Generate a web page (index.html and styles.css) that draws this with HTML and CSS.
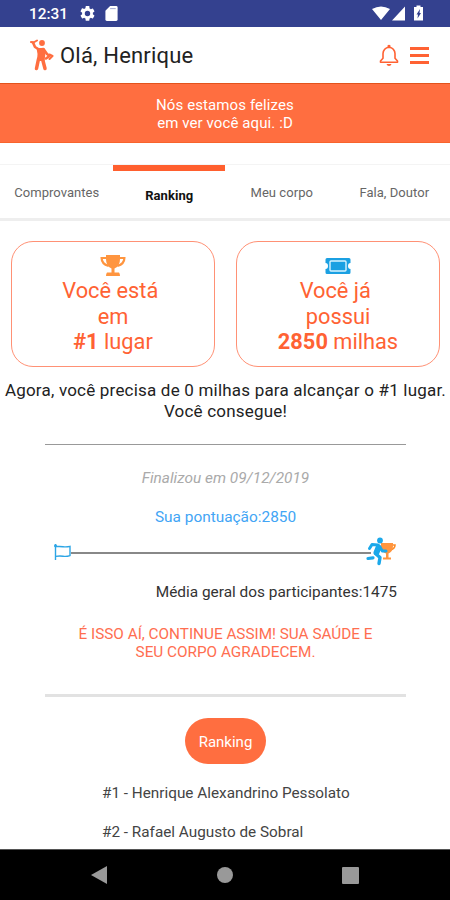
FILE: index.html
```html
<!DOCTYPE html>
<html lang="pt-BR">
<head>
    <meta charset="UTF-8">
    <title>Ranking</title>
    <link rel="stylesheet" href="styles.css">
</head>
<body>
    <div class="status-bar">
        <span class="clock">12:31</span>
        <svg class="gear" width="15" height="15" viewBox="2 2 20 20"><path fill="#fff" d="M19.14 12.94c.04-.3.06-.61.06-.94s-.02-.64-.07-.94l2.03-1.58a.5.5 0 0 0 .12-.61l-1.92-3.32a.49.49 0 0 0-.59-.22l-2.39.96a7 7 0 0 0-1.62-.94l-.36-2.54A.48.48 0 0 0 13.92 2h-3.84a.48.48 0 0 0-.47.41l-.36 2.54c-.59.24-1.13.57-1.62.94l-2.39-.96a.48.48 0 0 0-.59.22L2.74 8.87a.48.48 0 0 0 .12.61l2.03 1.58c-.05.3-.09.63-.09.94s.02.64.07.94l-2.03 1.58a.5.5 0 0 0-.12.61l1.92 3.32c.12.22.37.29.59.22l2.39-.96c.5.38 1.03.7 1.62.94l.36 2.54c.05.24.24.41.48.41h3.84c.24 0 .44-.17.47-.41l.36-2.54a7 7 0 0 0 1.62-.94l2.39.96c.22.08.47 0 .59-.22l1.92-3.32a.48.48 0 0 0-.12-.61zM12 15.6a3.6 3.6 0 1 1 0-7.2 3.6 3.6 0 0 1 0 7.2z"/></svg>
        <svg class="sd" width="13" height="15" viewBox="0 0 13 16"><path fill="#fff" d="M5 0h6.500q1.500 0 1.500 1.500v13q0 1.500-1.500 1.500h-10q-1.500 0-1.500-1.500V5z"/><path stroke="#9aa2cf" d="M5 2.800h6"/></svg>
        <svg class="signals" width="54" height="17" viewBox="0 0 54 17">
            <path fill="#fff" d="M0 4Q9-1 18 4L9 15zM20 15.500 33 1.500v14zM42 2h2.500V.5h4V2H51v13.500h-9z"/>
            <path fill="#34418f" d="M48 4 44.500 9.500h1.500l-.5 4 3.500-5.500h-1.500z"/>
        </svg>
    </div>

    <div class="header">
        <svg class="logo" width="24" height="32" viewBox="0 0 24 32">
            <g fill="none" stroke="#ff6e40" stroke-linejoin="round" stroke-linecap="round">
                <path stroke-width="2.600" d="M3 3.500 5 8l4 2.500 4.500-.5 3.500 5 2.500 2-3.500 2.500"/>
                <path stroke-width="2" d="M1 3 3.500 3.500 7 1.500M19.500 15.500l3 1.500-3 3"/>
                <path stroke-width="3.500" d="M8.500 20 6.500 29.500M12.500 20l2.500 9.500"/>
            </g>
            <path fill="#ff6e40" d="M6.500 9 14.500 9.500 15.500 14 14.500 22H7l.5-7z"/>
            <circle fill="#ff6e40" cx="12" cy="4" r="2.900"/>
        </svg>
        <h1>Olá, Henrique</h1>
        <svg class="bell" width="20" height="23" viewBox="0 0 20 23"><path fill="none" stroke="#ff6233" stroke-width="1.600" stroke-linejoin="round" d="M1.500 18.200v-1.200l2.500-2.800V9.500Q4.400 4 10 3.200 15.600 4 16 9.500v4.700l2.500 2.800v1.200z"/><path fill="#ff6233" d="M8.500 3V1.500q1.500-1.500 3 0V3zM7.500 20h5q-.5 2-2.500 2T7.500 20z"/></svg>
        <div class="menu"><i></i><i></i><i></i></div>
    </div>

    <div class="banner">Nós estamos felizes<br>em ver você aqui. :D</div>

    <div class="tabs">
        <div class="tab">Comprovantes</div>
        <div class="tab active">Ranking</div>
        <div class="tab">Meu corpo</div>
        <div class="tab">Fala, Doutor</div>
    </div>

    <div class="cards">
        <div class="card">
            <svg width="26" height="24" viewBox="0 0 26 24">
                <path fill="none" stroke="#ff953f" stroke-width="2.200" d="M7 4H1.600q0 6 7 8M19 4h5.400q0 6-7 8"/>
                <path fill="#ff953f" d="M6 1h14v4q0 7.500-5.500 9.500v4H19q1 1 1 3.500H6q0-2.500 1-3.500h4.500v-4Q6 12.500 6 5z"/>
            </svg>
            <p>Você está&nbsp;<br>em<br><b>#1</b> lugar</p>
        </div>
        <div class="card">
            <svg width="26" height="24" viewBox="0 0 26 24">
                <path fill="#1ba0e2" d="M2 4h22q1.500 0 1.500 1.500V9q-2.500 0-2.500 3t2.500 3v3.500Q25.500 20 24 20H2Q.5 20 .5 18.500V15Q3 15 3 12T.5 9V5.500Q.5 4 2 4z"/>
                <rect x="5" y="7" width="16" height="10" rx="1" fill="none" stroke="#d9f3ff" stroke-width="1.400"/>
            </svg>
            <p>Você já&nbsp;<br>possui<br><b>2850</b> milhas</p>
        </div>
    </div>

    <p class="goal">Agora, você precisa de 0 milhas para alcançar o #1 lugar.<br>Você consegue!</p>

    <div class="result">
        <p class="ended">Finalizou em 09/12/2019</p>
        <p class="score">Sua pontuação:2850</p>
        <div class="track">
            <svg width="17" height="17" viewBox="0 0 17 17"><path fill="none" stroke="#2ca5e5" stroke-width="1.400" d="M1.500 0v16M1.500 2.200q4 0 7.500.5t7-.3v9.200q-3.500 1.200-7 .6t-7.500.2"/><circle cx="1.500" cy="1.800" r="1.500" fill="#2ca5e5"/></svg>
            <div class="line"></div>
            <svg width="31" height="30" viewBox="0 0 31 30">
                <path fill="none" stroke="#ff8b24" stroke-width="1.600" d="M27 8h3q0 4-5 5"/>
                <path fill="#ff953f" d="M16 6h12v3q0 5.500-4.500 7.500v4H26v2h-8v-2h3v-4Q16 15 16 10z"/>
                <g fill="none" stroke="#1ba8ea" stroke-linecap="round" stroke-linejoin="round">
                    <path stroke-width="3" d="M4.500 11.500 7 7.500 13 8l4.500 6h3.500"/>
                    <path stroke-width="6" d="M13.500 10.500 11.500 15.500"/>
                    <path stroke-width="3.400" d="M11 17 15 20.500l-1 6"/>
                    <path stroke-width="3.200" d="M8 20.800 3 21.500"/>
                </g>
                <circle cx="15" cy="3.500" r="2.900" fill="#1ba8ea"/>
            </svg>
        </div>
        <p class="average">Média geral dos participantes:1475</p>
        <p class="cheer">É ISSO AÍ, CONTINUE ASSIM! SUA SAÚDE E<br>SEU CORPO AGRADECEM.</p>
    </div>

    <div class="ranking">
        <div class="ranking-button">Ranking</div>
        <p class="place">#1 - Henrique Alexandrino Pessolato</p>
        <p class="place">#2 - Rafael Augusto de Sobral</p>
    </div>

    <div class="nav-bar">
        <svg width="16" height="18" viewBox="0 0 16 18"><path fill="#999" d="M0 9 16 0v18z"/></svg>
        <div class="home"></div>
        <div class="recent"></div>
    </div>
</body>
</html>
```

FILE: styles.css
```css
* {
    box-sizing: border-box;
}
body {
    margin: 0;
    height: 900px;
    display: flex;
    flex-direction: column;
    overflow: hidden;
    font-family: Roboto, sans-serif;
    font-size: 15.400px;
    color: #333;
    background-color: #fff;
}
p, h1 {
    margin: 0;
    font-weight: normal;
    white-space: nowrap;
}
svg {
    display: block;
    flex: none;
}
.status-bar {
    height: 27px;
    flex: none;
    display: flex;
    align-items: center;
    padding: 0 28px 0 29px;
    background-color: #34418f;
    color: #fff;
}
.clock {
    width: 51px;
    font-size: 15.400px;
    font-weight: 500;
}
.sd {
    margin-left: 10px;
}
.signals {
    margin-left: auto;
    margin-right: -4px;
}
.header {
    height: 56px;
    flex: none;
    display: flex;
    align-items: center;
    padding: 0 21px 0 30px;
}
h1 {
    margin: 2px 0 0 6px;
    font-size: 22px;
    line-height: 26px;
    letter-spacing: 0.2px;
    color: #222;
}
.bell {
    margin-left: auto;
}
.menu {
    width: 19px;
    margin-left: 11px;
    display: flex;
    flex-direction: column;
    gap: 4px;
}
.menu i {
    height: 3px;
    background-color: #ff6233;
}
.banner {
    height: 60px;
    flex: none;
    padding-top: 12px;
    text-align: center;
    font-size: 15px;
    line-height: 18px;
    letter-spacing: 0.1px;
    color: #fff;
    background-color: #ff6e40;
    border-top: 1px solid #e2531c;
    border-bottom: 1px solid #f8642c;
}
.tabs {
    height: 57px;
    flex: none;
    margin-top: 21px;
    display: grid;
    grid-template-columns: repeat(4, 1fr);
    border-top: 1px solid #f4f4f4;
    border-bottom: 3px solid #eee;
}
.tab {
    padding: 20px 0 0 1px;
    text-align: center;
    font-size: 13px;
    line-height: 16px;
    letter-spacing: 0.05px;
    color: #666;
}
.active {
    padding-top: 17px;
    border-top: 6px solid #ff5f2e;
    font-weight: bold;
    color: #111;
}
.cards {
    flex: none;
    display: grid;
    grid-template-columns: 204px 204px;
    gap: 21px;
    padding: 20px 0 0 11px;
}
.card {
    height: 126px;
    padding-top: 12px;
    display: flex;
    flex-direction: column;
    align-items: center;
    border: 1px solid #ff9175;
    border-radius: 22px;
    text-align: center;
    font-size: 21.800px;
    line-height: 25.700px;
    color: #ff6233;
}
.goal {
    flex: none;
    margin-top: 13px;
    padding-left: 1px;
    text-align: center;
    font-size: 17px;
    line-height: 21px;
    letter-spacing: 0.2px;
    color: #222;
}
.result {
    height: 253px;
    flex: none;
    margin: 22px 44px 0 45px;
    display: flex;
    flex-direction: column;
    border-top: 1px solid #999;
    border-bottom: 3px solid #e2e2e2;
    line-height: 20px;
    text-align: center;
}
.ended {
    margin-top: 23px;
    font-style: italic;
    color: #aaa;
}
.score {
    margin-top: 19px;
    color: #42a5f5;
}
.track {
    height: 30px;
    margin: 10px 10px 0 9px;
    display: flex;
    align-items: center;
}
.line {
    flex: 1;
    height: 2px;
    margin: 2px -6px 0 0;
    background-color: #888;
}
.average {
    margin-top: 15px;
    padding-right: 9px;
    text-align: right;
}
.cheer {
    margin-top: 23px;
    font-size: 15.300px;
    line-height: 18px;
    color: #ff6e50;
}
.ranking {
    flex: none;
    height: 152px;
    padding-top: 21px;
}
.ranking-button {
    width: 81px;
    height: 46px;
    margin: 0 auto 19px 185px;
    border-radius: 23px;
    text-align: center;
    font-size: 15px;
    line-height: 48px;
    color: #fff;
    background-color: #ff6e40;
}
.place {
    margin: 0 0 18.500px 102px;
    font-size: 15.300px;
    line-height: 20px;
    color: #444;
}
.nav-bar {
    flex: 1;
    display: flex;
    align-items: center;
    justify-content: space-between;
    padding: 0 91px;
    background-color: #000;
    border-top: 1px solid #555;
}
.home {
    width: 16px;
    height: 16px;
    border-radius: 50%;
    background-color: #999;
}
.recent {
    width: 17px;
    height: 17px;
    border-radius: 1px;
    background-color: #999;
}
```
